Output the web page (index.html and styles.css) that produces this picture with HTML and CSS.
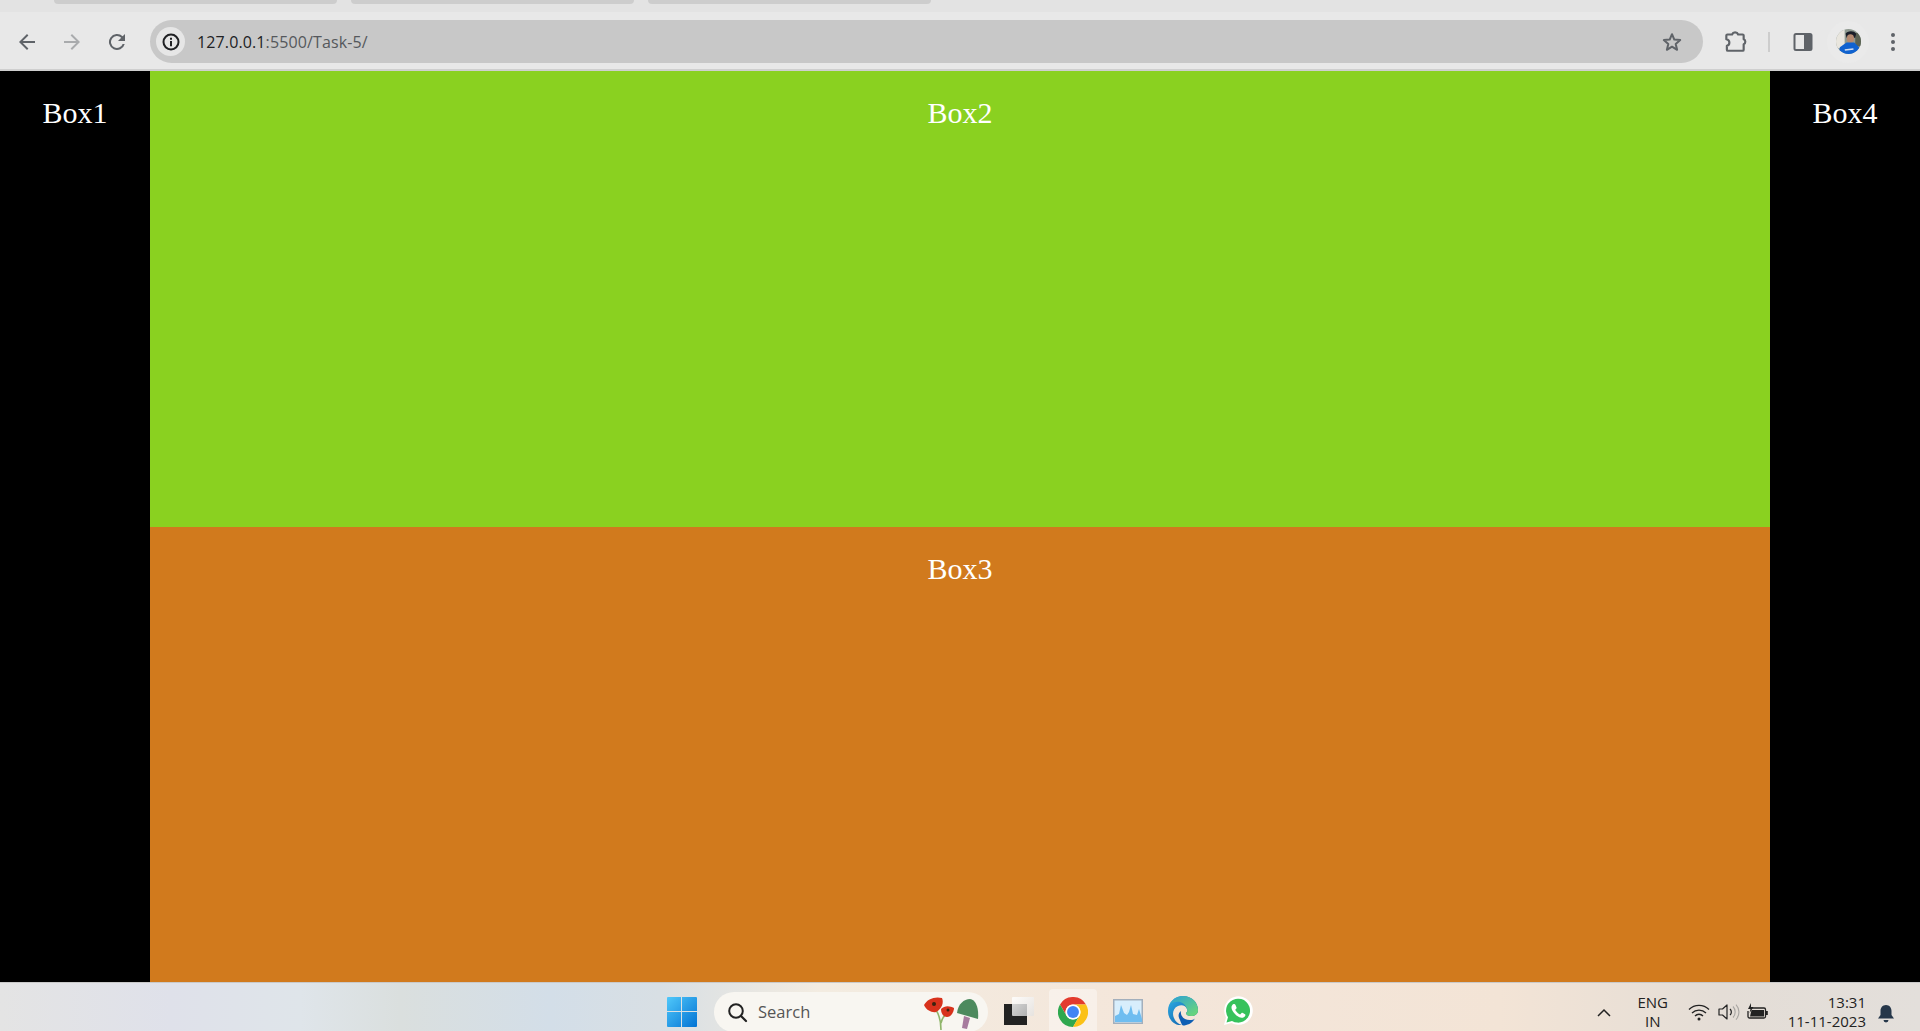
FILE: index.html
```html
<!DOCTYPE html>
<html lang="en">
<head>
    <meta charset="UTF-8">
    <title>Task-5</title>
    <link rel="stylesheet" href="styles.css">
</head>
<body>
    <div class="tabstrip">
        <div class="tab"></div>
        <div class="tab"></div>
        <div class="tab"></div>
    </div>

    <div class="toolbar">
        <svg class="tool back" width="24" height="24" viewBox="0 0 24 24"><path d="M20 11H7.8l5.6-5.6L12 4l-8 8 8 8 1.4-1.4L7.8 13H20z" fill="#5f6368"/></svg>
        <svg class="tool forward" width="24" height="24" viewBox="0 0 24 24"><path d="M4 11h12.2l-5.6-5.6L12 4l8 8-8 8-1.4-1.4 5.6-5.6H4z" fill="#a9abad"/></svg>
        <svg class="tool reload" width="24" height="24" viewBox="0 0 24 24"><path d="M17.65 6.35A8 8 0 1 0 19.73 14h-2.08a6 6 0 1 1-1.41-6.24L13 11h7V4z" fill="#5f6368"/></svg>
        <div class="omnibox">
            <div class="info">
                <svg width="18" height="18" viewBox="0 0 18 18"><circle cx="9" cy="9" r="7.5" fill="none" stroke="#202124" stroke-width="2"/><path d="M8 8h2v5.2H8zM8 4.8h2v2H8z" fill="#202124"/></svg>
            </div>
            <div class="url"><span class="host">127.0.0.1</span>:5500/Task-5/</div>
            <svg class="star" width="24" height="24" viewBox="0 0 24 24"><path d="M12 4.2l2.3 5.4 5.900.5-4.500 3.900 1.400 5.800-5.100-3.100-5.100 3.100 1.400-5.800-4.500-3.900 5.900-.5z" fill="none" stroke="#5f6368" stroke-width="2" stroke-linejoin="round"/></svg>
        </div>
        <svg class="tool puzzle" width="26" height="26" viewBox="0 0 24 24"><path d="M5 6h4.300a3 3 0 0 1 5.600 0H19a1 1 0 0 1 1 1v3.300a2.500 2.500 0 0 1 0 4.600V20a1 1 0 0 1-1 1H5.500a1 1 0 0 1-1-1v-3.500c1.400-.3 2.300-1.600 2.300-3.100 0-1.500-1-2.700-2.800-3V7a1 1 0 0 1 1-1z" fill="none" stroke="#5f6368" stroke-width="2" stroke-linejoin="round"/></svg>
        <div class="divider"></div>
        <svg class="tool panel" width="24" height="24" viewBox="0 0 24 24"><rect x="3.500" y="4" width="17" height="16" rx="1.500" fill="none" stroke="#5f6368" stroke-width="2"/><rect x="13" y="4" width="7.500" height="16" fill="#5f6368"/></svg>
        <div class="avatar">
            <svg width="25" height="25" viewBox="0 0 26 26">
                <clipPath id="face"><circle cx="13" cy="13" r="13"/></clipPath>
                <g clip-path="url(#face)">
                    <rect width="26" height="26" fill="#8f9a90"/>
                    <rect width="9" height="20" fill="#e9e6de"/>
                    <rect x="20" y="4" width="6" height="14" fill="#5a6252"/>
                    <path d="M10 5c1-3 9-4 11 0l-1 4H11z" fill="#1a1e28"/>
                    <ellipse cx="15" cy="10" rx="3.800" ry="4.500" fill="#b58a70"/>
                    <path d="M3 26l1-7 7-5 8 0 5 5 0 7z" fill="#0f62d0"/>
                    <path d="M9 21l9-1 .3 1.500-9 1z" fill="#d5deee"/>
                </g>
            </svg>
        </div>
        <svg class="tool menu" width="6" height="20" viewBox="0 0 6 20"><circle cx="3" cy="3" r="2" fill="#5f6368"/><circle cx="3" cy="10" r="2" fill="#5f6368"/><circle cx="3" cy="17" r="2" fill="#5f6368"/></svg>
    </div>

    <div class="page">
        <div class="box box1">Box1</div>
        <div class="middle">
            <div class="box box2">Box2</div>
            <div class="box box3">Box3</div>
        </div>
        <div class="box box4">Box4</div>
    </div>

    <div class="taskbar">
        <svg class="win" width="30" height="30" viewBox="0 0 30 30">
            <defs>
                <linearGradient id="winblue" x1="0" y1="0" x2="1" y2="1"><stop offset="0" stop-color="#50c8fa"/><stop offset="1" stop-color="#0273d4"/></linearGradient>
            </defs>
            <path d="M1 0h13v14H0V1a1 1 0 0 1 1-1zM15 0h14a1 1 0 0 1 1 1v13H15zM0 15h14v15H1a1 1 0 0 1-1-1zM15 15h15v14a1 1 0 0 1-1 1H15z" fill="url(#winblue)"/>
        </svg>
        <div class="search">
            <svg width="22" height="22" viewBox="0 0 22 22"><circle cx="10" cy="10" r="6.800" fill="none" stroke="#222" stroke-width="2"/><path d="M15 15l5 5" stroke="#222" stroke-width="2.200" stroke-linecap="round"/></svg>
            <span class="search-text">Search</span>
            <svg class="poppy" width="60" height="36" viewBox="0 0 60 36">
                <path d="M17 35c0-7-1-14-5-20M17 28c1-5 4-9 9-11" stroke="#8fb56a" stroke-width="1.600" fill="none"/>
                <path d="M0 10c3-6 11-9 18-7 2 4 0 11-6 14-4 1-10-2-12-7z" fill="#d8321c"/>
                <path d="M17 14c4-4 9-3 13-1 0 4-3 9-7 9-4 0-6-4-6-8z" fill="#d8321c"/>
                <circle cx="10" cy="9" r="2" fill="#3a2410"/>
                <circle cx="24" cy="15" r="1.500" fill="#3a2410"/>
                <path d="M33 18c1-9 7-14 13-14 6 1 9 9 8 20z" fill="#4d8a5e"/>
                <path d="M40 21l6 2-3 11-5-1z" fill="#a77b9e"/>
            </svg>
        </div>
        <div class="taskview">
            <div class="tv-back"></div>
            <div class="tv-front"></div>
        </div>
        <div class="tile">
            <svg class="chrome" width="30" height="30" viewBox="0 0 48 48">
                <path d="M44.800 12H24A12 12 0 0 0 13.600 30L3.200 12A24 24 0 0 1 44.800 12z" fill="#e33b2e"/>
                <path d="M3.200 12L13.600 30A12 12 0 0 0 34.400 30L24 48A24 24 0 0 1 3.200 12z" fill="#2fa84f"/>
                <path d="M24 48L34.400 30A12 12 0 0 0 24 12H44.800A24 24 0 0 1 24 48z" fill="#fbc117"/>
                <circle cx="24" cy="24" r="12" fill="#fff"/>
                <circle cx="24" cy="24" r="9.500" fill="#4285f4"/>
            </svg>
        </div>
        <svg class="monitor" width="30" height="25" viewBox="0 0 30 25">
            <rect x=".75" y=".75" width="28.500" height="23.500" fill="#d8eefc" stroke="#a3afbc" stroke-width="1.500"/>
            <path d="M2 23V17l4-2 2-9 3 8 3 2 2-3 2-7 2 9 4 1 2-6 3 10v3z" fill="#6fbdf0"/>
        </svg>
        <svg class="edge" width="30" height="30" viewBox="0 0 30 30">
            <defs>
                <linearGradient id="edgeblue" x1="0" y1="0" x2="1" y2="1"><stop offset="0" stop-color="#2fb2e8"/><stop offset="1" stop-color="#0b4f9e"/></linearGradient>
                <linearGradient id="edgegreen" x1="0" y1="0" x2="1" y2="1"><stop offset="0" stop-color="#2c9fd8"/><stop offset="1" stop-color="#6fdc70"/></linearGradient>
            </defs>
            <path d="M0 15C0 6 7 0 15 0c9 0 15 6.500 15 14 0 4-3 6-7 6-3 0-5-1-5-3 1-1 2-2 1-4-1-3-5-5-9-3-5 2-6 8-4 12 1 3 4 6 8 7C6 30 0 23 0 15z" fill="url(#edgeblue)"/>
            <path d="M2 8c3-6 9-8 13-8 9 0 15 6.500 15 14 0 4-3 6-7 6-3 0-5-1-5-3 1-1 2-2 1-4C17 7 12 5 8 6 5 6 3 7 2 8z" fill="url(#edgegreen)"/>
            <path d="M12 24c-2-3-2-7 1-9-1 5 3 9 9 9 2 0 4-.5 5-1.500-3 5-8 7-12 7-1 0-2-3-3-5.500z" fill="#0e5fb4"/>
        </svg>
        <svg class="whatsapp" width="30" height="30" viewBox="0 0 30 30">
            <path d="M1 29l2-7.500A14.300 14.300 0 1 1 8.500 27z" fill="#fff"/>
            <path d="M3.500 26.500l1.500-5.300A12 12 0 1 1 9 25z" fill="#36c25c"/>
            <path d="M10.500 8c-1 .5-2.300 2-2 4 .5 3.500 5.500 9.300 10 9.800 2 .2 3.800-1.300 4-2.800.1-.6-3-2.300-3.500-2.200-.6.100-1.200 1.700-1.900 1.600-1.500-.2-4.400-3-4.800-4.600-.1-.6 1.300-1.300 1.300-1.900 0-.5-1.300-3.900-2.100-3.900z" fill="#fff"/>
        </svg>

        <div class="tray">
            <svg class="chevron" width="14" height="9" viewBox="0 0 14 9"><path d="M1 8l6-6 6 6" fill="none" stroke="#222" stroke-width="1.500"/></svg>
            <div class="lang">ENG<br>IN</div>
            <svg class="wifi" width="22" height="18" viewBox="0 0 22 18"><path d="M1 6.500a14 14 0 0 1 20 0M4 10a10 10 0 0 1 14 0M7 13a5.500 5.500 0 0 1 8 0" fill="none" stroke="#222" stroke-width="1.300"/><circle cx="11" cy="16" r="1.500" fill="#222"/></svg>
            <svg class="volume" width="22" height="18" viewBox="0 0 22 18"><path d="M1 6h3.500L9 2v14l-4.500-4H1z" fill="none" stroke="#222" stroke-width="1.200" stroke-linejoin="round"/><path d="M12 6a4 4 0 0 1 0 6" fill="none" stroke="#222" stroke-width="1.200"/><path d="M15 3.500a8 8 0 0 1 0 11M18 1.500a11 11 0 0 1 0 15" fill="none" stroke="#a8a6a2" stroke-width="1.100"/></svg>
            <svg class="battery" width="22" height="18" viewBox="0 0 22 18"><path d="M4 5h14a1.500 1.500 0 0 1 1.500 1.500v7A1.500 1.500 0 0 1 18 15H3.500A1.500 1.500 0 0 1 2 13.500V8" fill="none" stroke="#222" stroke-width="1.300"/><path d="M4 13.500l1.500-6.500H18v6.500z" fill="#222"/><path d="M20 8h1.800v4H20zM5 0L2 6h2.500L3.500 10 7.500 4H5z" fill="#222"/></svg>
            <div class="clock">13:31<br>11-11-2023</div>
            <svg class="bell" width="18" height="22" viewBox="0 0 18 20"><path d="M9 1c3.500 0 5.500 2.800 5.500 6v4l2.500 3.500H1L3.500 11V7C3.500 3.800 5.500 1 9 1z" fill="#26374a"/><path d="M6.500 16h5a2.500 2.500 0 0 1-5 0z" fill="#26374a"/></svg>
        </div>
    </div>
</body>
</html>
```

FILE: styles.css
```css
* {
    box-sizing: border-box;
}
html, body {
    height: 100%;
}
body {
    margin: 0;
    display: flex;
    flex-direction: column;
    overflow: hidden;
    background: #000;
}

/* browser top */
.tabstrip {
    height: 12px;
    background: #e3e3e3;
    display: flex;
    align-items: flex-start;
    padding-left: 54px;
    gap: 14px;
}
.tab {
    width: 283px;
    height: 4px;
    background: #cdcdcd;
    border-radius: 0 0 8px 8px;
}
.toolbar {
    height: 59px;
    padding-top: 2px;
    background: #e8e8e8;
    border-bottom: 2px solid #cfcfcf;
    display: flex;
    align-items: center;
}
.tool {
    flex: none;
}
.back {
    margin-left: 15px;
}
.forward {
    margin-left: 21px;
}
.reload {
    margin-left: 21px;
}
.omnibox {
    width: 1553px;
    height: 43px;
    margin-left: 21px;
    background: #c8c8c8;
    border-radius: 22px;
    display: flex;
    align-items: center;
    padding: 0 6px;
}
.info {
    width: 29px;
    height: 29px;
    border-radius: 50%;
    background: #e6e6e6;
    display: flex;
    align-items: center;
    justify-content: center;
}
.url {
    margin-left: 12px;
    flex: 1;
    font: 16px "Open Sans", sans-serif;
    letter-spacing: 0.12px;
    color: #55585c;
}
.host {
    color: #202124;
}
.star {
    margin-right: 13px;
}
.puzzle {
    margin: -2px 0 0 19px;
}
.divider {
    width: 2px;
    height: 20px;
    margin-left: 20px;
    background: #cdcdcd;
}
.panel {
    margin-left: 21px;
}
.avatar {
    width: 42px;
    height: 42px;
    margin-left: 12px;
    border-radius: 50%;
    background: #eaeaea;
    display: flex;
    align-items: center;
    justify-content: center;
}
.menu {
    margin-left: 21px;
}

/* the four boxes */
.page {
    flex: 1;
    display: flex;
    min-height: 0;
}
.box {
    color: #fff;
    font: 30px "Liberation Serif", "Times New Roman", serif;
    text-align: center;
    padding-top: 25px;
}
.box1, .box4 {
    width: 150px;
    background: #000;
}
.middle {
    flex: 1;
    display: flex;
    flex-direction: column;
}
.box2 {
    height: 456px;
    background: #8ad120;
}
.box3 {
    flex: 1;
    background: #d17a1d;
}

/* windows taskbar */
.taskbar {
    height: 49px;
    flex: none;
    overflow: hidden;
    display: flex;
    align-items: center;
    padding-top: 3px;
    border-top: 1px solid #c9c9c9;
    background: linear-gradient(90deg, #e4e4e4 0, #dfe1ea 170px, #dfe5ea 300px, #dadfde 400px, #d3dee8 550px, #d8dfe4 660px, #f3ece1 820px, #f4e6da 1150px, #f3e4d6 1500px, #e4ddd6 1720px, #e3dfdb 1920px);
    font-family: "Open Sans", "Noto Sans", sans-serif;
    color: #222;
}
.win {
    margin: 7px 0 0 667px;
    flex: none;
}
.search {
    width: 274px;
    height: 40px;
    margin: 7px 0 0 17px;
    flex: none;
    display: flex;
    align-items: center;
    padding: 0 0 1px 12px;
    background: #f8f6f1;
    border-radius: 20px;
}
.search-text {
    flex: 1;
    margin-left: 10px;
    font-size: 16.5px;
    color: #555;
}
.poppy {
    margin: 3px 4px 0 0;
}
.taskview {
    width: 30px;
    height: 28px;
    margin: 5px 0 0 16px;
    flex: none;
    position: relative;
}
.tv-back {
    position: absolute;
    left: 0;
    bottom: 0;
    width: 23px;
    height: 21px;
    background: #222;
}
.tv-front {
    position: absolute;
    right: 0;
    top: 0;
    width: 22px;
    height: 19px;
    background: linear-gradient(135deg, rgba(255, 255, 255, 0.85), rgba(225, 225, 225, 0.7));
    border-radius: 1px;
}
.tile {
    width: 48px;
    height: 43px;
    margin: 3px 0 0 15px;
    flex: none;
    display: flex;
    align-items: center;
    justify-content: center;
    background: rgba(255, 255, 255, 0.4);
    border-radius: 4px 4px 0 0;
}
.chrome {
    margin-top: 3px;
}
.monitor {
    margin: 5px 0 0 16px;
    flex: none;
}
.edge {
    margin: 5px 0 0 25px;
    flex: none;
}
.whatsapp {
    margin: 5px 0 0 25px;
    flex: none;
}
.tray {
    margin-left: auto;
    height: 100%;
    display: flex;
    align-items: center;
    padding-top: 7px;
    font-size: 15px;
    line-height: 19px;
    flex: none;
}
.lang {
    width: 40px;
    margin-left: 22px;
    text-align: center;
}
.wifi {
    margin-left: 15px;
}
.volume {
    margin-left: 8px;
}
.battery {
    margin-left: 6px;
}
.clock {
    margin-left: 20px;
    text-align: right;
}
.bell {
    margin: 3px 25px 0 11px;
}
```
